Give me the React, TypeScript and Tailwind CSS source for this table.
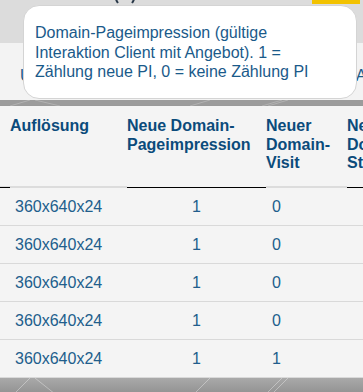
import React from 'react'

const rows = [
  { res: '360x640x24', pi: 1, visit: 0 },
  { res: '360x640x24', pi: 1, visit: 0 },
  { res: '360x640x24', pi: 1, visit: 0 },
  { res: '360x640x24', pi: 1, visit: 0 },
  { res: '360x640x24', pi: 1, visit: 1 },
]

// faint diagonal streaks on the grey backdrop
function Streaks({ className }: { className?: string }) {
  return (
    <svg className={className} width="363" height="20" viewBox="0 0 363 20" preserveAspectRatio="none">
      <g stroke="#ffffff" strokeOpacity="0.35" strokeWidth="1">
        <line x1="10" y1="20" x2="30" y2="0" />
        <line x1="35" y1="0" x2="60" y2="20" />
        <line x1="190" y1="20" x2="210" y2="0" />
        <line x1="262" y1="20" x2="282" y2="0" />
        <line x1="268" y1="20" x2="288" y2="0" />
      </g>
    </svg>
  )
}

export default function App() {
  return (
    <div className="w-[363px] h-[392px] overflow-hidden bg-[#9a9a9a] font-['Liberation_Sans',Arial,sans-serif] relative">
      {/* top strip */}
      <div className="relative h-[43px] bg-[#dcdcdc]">
        <svg className="absolute left-[112px] top-[-14px]" width="26" height="20" viewBox="0 0 26 20">
          <path d="M4 2 Q2 12 6 17" fill="none" stroke="#2b3a4a" strokeWidth="2" />
          <path d="M22 2 Q24 12 20 17" fill="none" stroke="#2b3a4a" strokeWidth="2" />
        </svg>
        <div className="absolute right-[3px] top-0 w-[48px] h-[4px] bg-[#f2c200]" />
      </div>

      {/* tab labels */}
      <div className="h-[57px] bg-[#f3f3f3] flex items-center justify-between pt-[8px] text-[16px] text-[#1d5b89]">
        <span className="pl-[20px]">U</span>
        <span className="mr-[-7px]">Al</span>
      </div>

      <div className="relative h-[6px] bg-[#9c9c9c] overflow-hidden">
        <Streaks className="absolute inset-0 w-full h-full" />
      </div>

      {/* table */}
      <div className="bg-[#f4f4f4] shadow-[0_2px_3px_rgba(0,0,0,0.25)] relative">
        <div className="grid grid-cols-[127px_139px_81px_1fr] h-[82px] text-[16px] leading-[18.5px] font-bold text-[#0b4b7b]">
          <div className="pt-[11px] pl-[10px] border-b-2 border-[#dcdcdc] relative">
            Auflösung
            <div className="absolute left-0 bottom-[-2px] w-[10px] h-[1px] bg-black" />
          </div>
          <div className="pt-[11px] border-b border-black whitespace-nowrap">
            Neue Domain-
            <br />
            Pageimpression
          </div>
          <div className="pt-[11px] border-b-2 border-[#dcdcdc]">
            Neuer
            <br />
            Domain-
            <br />
            Visit
          </div>
          <div className="pt-[11px] border-b border-black whitespace-nowrap overflow-hidden">
            Neuer
            <br />
            Domain-
            <br />
            Start
          </div>
        </div>

        {rows.map((r, i) => (
          <div
            key={i}
            className="grid grid-cols-[127px_139px_81px_1fr] h-[38px] items-center border-b border-[#d9d9d9] text-[16px] text-[#215e8c]"
          >
            <div className="pl-[15px]">{r.res}</div>
            <div className="text-center">{r.pi}</div>
            <div className="pl-[6px]">{r.visit}</div>
            <div />
          </div>
        ))}
      </div>

      <div className="relative h-[20px] bg-gradient-to-b from-[#a9a9a9] to-[#8c8c8c] overflow-hidden">
        <Streaks className="absolute inset-0 w-full h-full" />
      </div>

      {/* info tooltip */}
      <div className="absolute left-[23px] top-[5px] w-[334px] h-[94px] bg-white rounded-[16px] border border-[#d4d4d4] pl-[11px] pt-[17px] text-[16px] leading-[19.5px] text-[#1a5a8a]">
        Domain-Pageimpression (gültige
        <br />
        Interaktion Client mit Angebot). 1 =
        <br />
        Zählung neue PI, 0 = keine Zählung PI
      </div>
    </div>
  )
}
